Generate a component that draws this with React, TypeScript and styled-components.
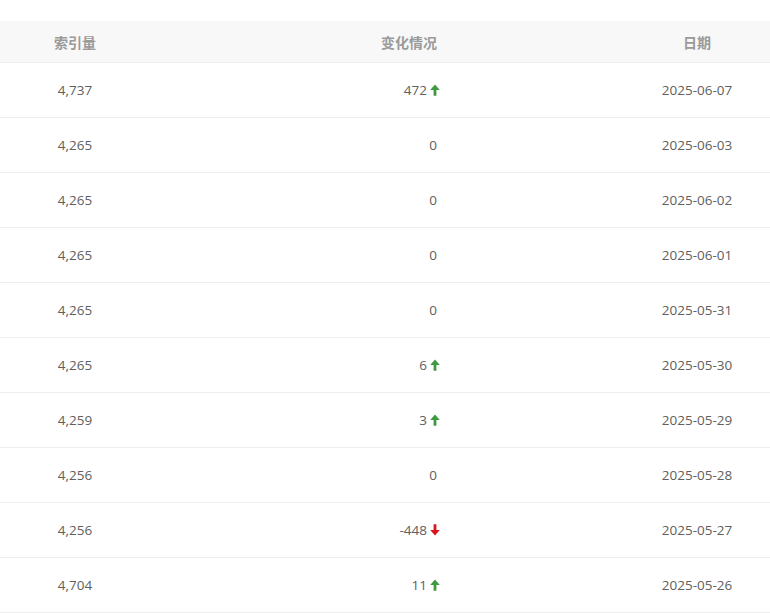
import styled, { createGlobalStyle } from "styled-components";

const GlobalStyle = createGlobalStyle`
  body {
    margin: 0;
    background: #fff;
    font-family: "Open Sans", "Noto Sans CJK SC", sans-serif;
  }
`;

type Row = { total: string; change: number; date: string };

const rows: Row[] = [
  { total: "4,737", change: 472, date: "2025-06-07" },
  { total: "4,265", change: 0, date: "2025-06-03" },
  { total: "4,265", change: 0, date: "2025-06-02" },
  { total: "4,265", change: 0, date: "2025-06-01" },
  { total: "4,265", change: 0, date: "2025-05-31" },
  { total: "4,265", change: 6, date: "2025-05-30" },
  { total: "4,259", change: 3, date: "2025-05-29" },
  { total: "4,256", change: 0, date: "2025-05-28" },
  { total: "4,256", change: -448, date: "2025-05-27" },
  { total: "4,704", change: 11, date: "2025-05-26" },
];

const Arrow = ({ up }: { up: boolean }) => (
  <ArrowSvg viewBox="0 0 10 12" $up={up}>
    <path d="M5 0.5 L9.8 6 L6.4 6 L6.4 11.8 L3.6 11.8 L3.6 6 L0.2 6 Z" />
  </ArrowSvg>
);

const App = () => {
  return (
    <>
      <GlobalStyle />
      <Page>
        <Table>
          <HeadRow>
            <HeadCell>索引量</HeadCell>
            <HeadCell $align="right">变化情况</HeadCell>
            <HeadCell>日期</HeadCell>
          </HeadRow>
          {rows.map((r, i) => (
            <BodyRow key={i}>
              <Cell>{r.total}</Cell>
              <Cell $align="right">
                {r.change}
                {r.change !== 0 && <Arrow up={r.change > 0} />}
              </Cell>
              <Cell>{r.date}</Cell>
            </BodyRow>
          ))}
        </Table>
      </Page>
    </>
  );
};

export default App;

const Page = styled.div`
  padding-top: 21px;
  width: 770px;
`;

const Table = styled.div`
  display: flex;
  flex-direction: column;
`;

const HeadRow = styled.div`
  display: grid;
  grid-template-columns: 150px 1fr 146px;
  height: 41px;
  align-items: center;
  background: #f8f8f8;
  border-bottom: 1px solid #eeeeee;
`;

const BodyRow = styled.div`
  display: grid;
  grid-template-columns: 150px 1fr 146px;
  height: 54px;
  align-items: center;
  border-bottom: 1px solid #eeeeee;
`;

const HeadCell = styled.div<{ $align?: string }>`
  text-align: ${(p) => p.$align || "center"};
  padding-right: ${(p) => (p.$align === "right" ? "187px" : "0")};
  font-size: 14px;
  font-weight: bold;
  color: #9a9a9a;
`;

const Cell = styled.div<{ $align?: string }>`
  display: flex;
  align-items: center;
  justify-content: ${(p) => (p.$align === "right" ? "flex-end" : "center")};
  padding-right: ${(p) => (p.$align === "right" ? "187px" : "0")};
  font-size: 13.5px;
  color: #606060;
`;

const ArrowSvg = styled.svg<{ $up: boolean }>`
  width: 10px;
  height: 12px;
  margin-left: 3px;
  margin-right: -3px;
  fill: ${(p) => (p.$up ? "#3f9a3f" : "#d9161c")};
  transform: ${(p) => (p.$up ? "none" : "rotate(180deg)")};
`;
